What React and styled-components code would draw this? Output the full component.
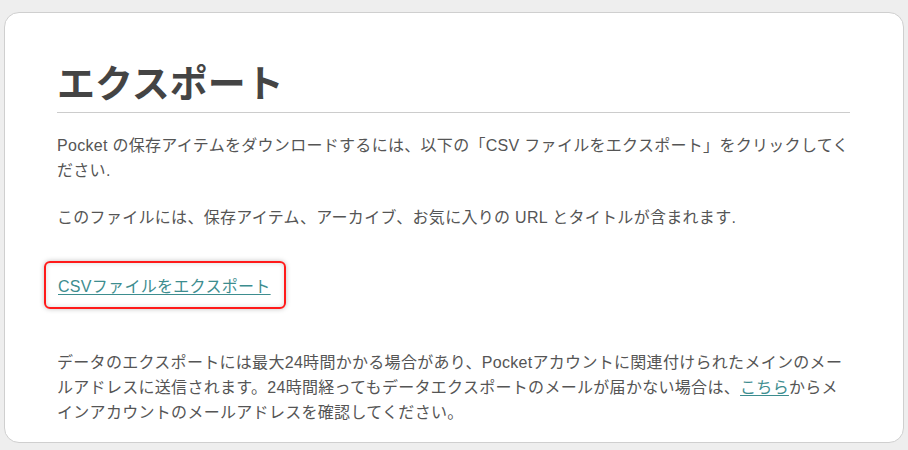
import React from 'react';
import styled, { createGlobalStyle } from 'styled-components';

const Global = createGlobalStyle`
  html, body {
    margin: 0;
    padding: 0;
    background: #eeeeee;
  }
  body {
    font-family: "Liberation Sans", "Noto Sans CJK JP", sans-serif;
    color: #555555;
  }
`;

const Page = styled.div`
  padding: 12px 4px 10px 4px;
`;

const Card = styled.section`
  width: 900px;
  box-sizing: border-box;
  background: #ffffff;
  border: 1px solid #cfcfcf;
  border-radius: 15px;
  padding: 45px 53px 17px 52px;
`;

const Title = styled.h1`
  margin: 0;
  font-family: "Noto Sans CJK JP", sans-serif;
  font-size: 38px;
  font-weight: 700;
  line-height: 46px;
  color: #444444;
  padding-bottom: 8px;
  border-bottom: 1px solid #cccccc;
`;

const Text = styled.p`
  margin: ${(p) => p.$top || 0}px 0 0 0;
  font-size: 16px;
  line-height: 25px;
  letter-spacing: 0.3px;
`;

const LinkBox = styled.div`
  display: inline-flex;
  align-items: center;
  margin: 31px 0 0 -13px;
  height: 42px;
  padding: 2px 13px 0 12px;
  box-sizing: content-box;
  border: 2px solid #ff1a1a;
  border-radius: 6px;
  box-shadow: 0 0 5px rgba(0, 0, 0, 0.25), inset 0 0 5px rgba(0, 0, 0, 0.15);
`;

const Link = styled.a`
  color: #3d8d8f;
  font-size: 16px;
  line-height: 25px;
  letter-spacing: 0.3px;
  text-decoration: underline;
  text-underline-offset: 2px;
  cursor: pointer;
`;

export default function App() {
  return (
    <>
      <Global />
      <Page>
        <Card>
          <Title>エクスポート</Title>
          <Text $top={20}>
            Pocket の保存アイテムをダウンロードするには、以下の「CSV ファイルをエクスポート」をクリックしてください.
          </Text>
          <Text $top={22}>
            このファイルには、保存アイテム、アーカイブ、お気に入りの URL とタイトルが含まれます.
          </Text>
          <LinkBox>
            <Link>CSVファイルをエクスポート</Link>
          </LinkBox>
          <Text $top={41}>
            データのエクスポートには最大24時間かかる場合があり、Pocketアカウントに関連付けられたメインのメールアドレスに送信されます。24時間経ってもデータエクスポートのメールが届かない場合は、<Link>こちら</Link>からメインアカウントのメールアドレスを確認してください。
          </Text>
        </Card>
      </Page>
    </>
  );
}
